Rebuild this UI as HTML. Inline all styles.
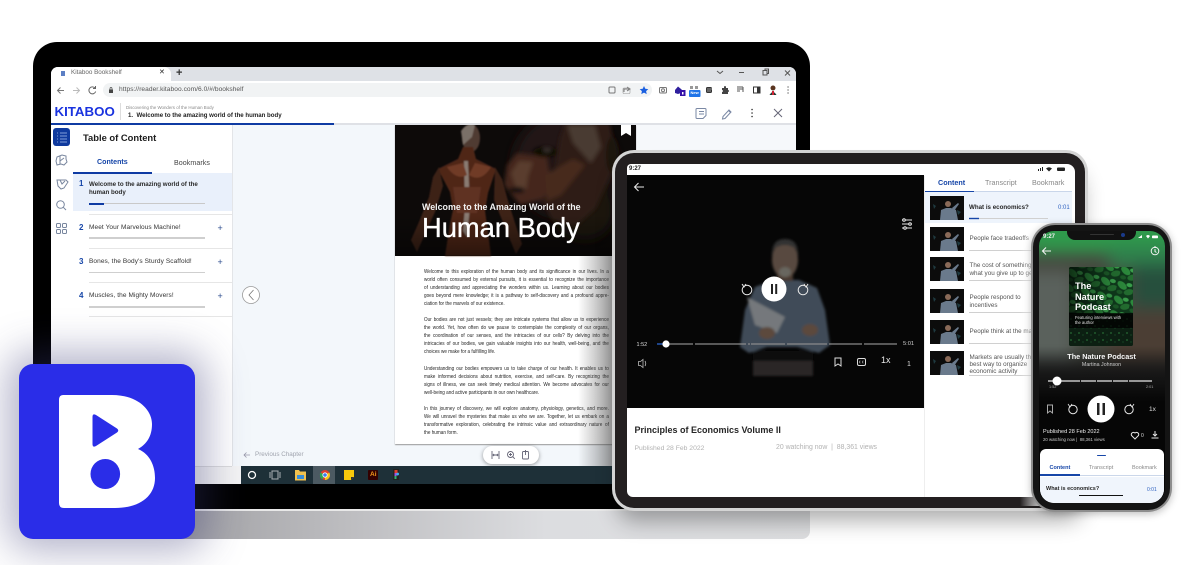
<!DOCTYPE html>
<html><head><meta charset="utf-8"><style>
html,body{margin:0;padding:0;background:#fff}
#r{position:relative;width:1200px;height:565px;overflow:hidden;background:#fff;font-family:"Liberation Sans",sans-serif}
.a{position:absolute}
.t{position:absolute;white-space:nowrap;line-height:1}
svg{position:absolute;overflow:visible}
#bk{transform:scaleX(.86);transform-origin:0 0}
#bk div{white-space:nowrap;height:8.05px;line-height:8.05px;text-align:justify;text-align-last:justify}
#bk div.e{text-align-last:left}
</style></head><body><div id="r">

<!-- laptop base -->
<div class="a" style="left:150px;top:509px;width:660px;height:30px;border-radius:0 0 8px 0;background:linear-gradient(90deg,#9c9ca0 0,#bdbdc0 30%,#dcdde0 60%,#dedfe1 100%)"></div>
<div class="a" style="left:150px;top:509px;width:660px;height:1.500px;background:#e8e8e8"></div>

<!-- laptop body -->
<div class="a" style="left:33px;top:42px;width:777px;height:467px;background:#000;border-radius:24px 24px 0 0"></div>
<div class="a" style="left:51px;top:67px;width:745px;height:417px;background:#fff;border-radius:7px 7px 0 0;overflow:hidden">
 <div class="a" style="left:0;top:0;width:745px;height:14px;background:#dee1e6"></div>
 <div class="a" style="left:0;top:0;width:120px;height:14px;background:#fff;border-radius:7px 7px 0 0"></div>
 <div class="a" style="left:0;top:30px;width:745px;height:1px;background:#fff"></div>
 <div class="a" style="left:52px;top:16px;width:549px;height:14px;background:#f1f3f4;border-radius:7px"></div>
</div>
<!-- tab strip -->
<div class="a" style="left:61px;top:71px;width:4px;height:5px;background:#5c7fc4"></div>
<div class="t" style="left:71px;top:69.500px;font-size:6.300px;color:#666">Kitaboo Bookshelf</div>
<div class="t" style="left:159px;top:69px;font-size:7px;color:#222">✕</div>
<div class="t" style="left:176px;top:67.500px;font-size:11px;color:#333;font-weight:bold">+</div>
<svg style="left:0;top:0" width="1200" height="565" fill="none" stroke="#555" stroke-width="1">
 <path d="M717 71l3 2.500 3-2.500M739 72.500h5"/>
 <rect x="763" y="70.500" width="4" height="4.500"/><path d="M765 70v-1h3.500v4.500h-1"/>
 <path d="M785 70.500l5 5m0-5l-5 5"/>
 <path d="M64 90.500h-6m2.500-3l-3 3 3 3" stroke="#777"/><path d="M73 90.500h6m-2.500-3l3 3-3 3" stroke="#bbb"/>
 <path d="M95 88a3.500 3.500 0 1 0 .7 3.500M95.500 86v2.500h-2.500" stroke="#666"/>
 <rect x="109" y="89.500" width="4" height="3.500" fill="#444" stroke="none"/><path d="M110 89.500v-1a1 1 0 0 1 2 0v1" stroke="#444" stroke-width=".7"/>
 <rect x="609" y="87" width="6" height="6" rx="1" stroke="#777"/>
 <path d="M624 92v-3h5m-2-2l3 2-3 2" stroke="#777"/><rect x="623" y="88" width="7" height="5.500" rx="1" stroke="#999" stroke-width=".6"/>
 <path d="M644 86l1.300 2.800 3 .3-2.200 2 .6 3-2.700-1.500-2.700 1.500.6-3-2.200-2 3-.3z" fill="#1a5fe0" stroke="none"/>
 <rect x="659.500" y="87.500" width="7" height="5.500" rx="1" stroke="#777"/><circle cx="663" cy="90.300" r="1.500" stroke="#777"/>
 <path d="M675 90l3-3.500 3 2.500 2 2-2 2-3 1-3-1z" fill="#2f1f9e" stroke="none"/>
 <rect x="680" y="90" width="5.500" height="6" fill="#3510a8" stroke="none"/><rect x="682" y="92" width="1.500" height="2.500" fill="#fff" stroke="none"/>
 <rect x="689" y="90" width="11.500" height="7" rx="1" fill="#1f74e8" stroke="none"/>
 <rect x="690" y="86" width="3" height="3" fill="#999" stroke="none"/><rect x="695" y="86" width="3" height="3" fill="#999" stroke="none"/>
 <rect x="706" y="87" width="6" height="6" rx="1.500" fill="#333" stroke="none"/><path d="M707 89h6m-6 2h4" stroke="#fff" stroke-width=".5"/>
 <path d="M722 88h2v-1a1 1 0 0 1 2 0v1h2v2a1 1 0 0 1 0 2v2h-6v-2a1 1 0 0 0 0-2z" fill="#444" stroke="none"/>
 <path d="M737 87h6m-6 2h6m-6 2h3m3-4v5" stroke="#555"/>
 <rect x="753.500" y="87" width="6.500" height="6" stroke="#333"/><rect x="757" y="87" width="3" height="6" fill="#333" stroke="none"/>
 <circle cx="773" cy="88" r="2.500" fill="#5a3520" stroke="none"/><path d="M769.500 95q3.500-6 7 0z" fill="#1c3c34" stroke="none"/><rect x="772" y="91" width="2" height="4" fill="#c23" stroke="none"/>
 <path d="M788 87h.1m-.1 3h.1m-.1 3h.1" stroke="#555" stroke-width="1.300" stroke-linecap="round"/>
</svg>
<div class="t" style="left:119px;top:87px;font-size:6.600px;color:#555;letter-spacing:.05px">https://reader.kitaboo.com/6.0/#/bookshelf</div>
<div class="t" style="left:690.500px;top:91.300px;font-size:4px;color:#fff;font-weight:bold">New</div>

<!-- reader header -->
<div class="t" style="left:54.500px;top:105px;font-size:13.300px;font-weight:bold;color:#1a33df">KITABOO</div>
<div class="a" style="left:120px;top:103px;width:1px;height:17px;background:#ddd"></div>
<div class="t" style="left:126px;top:105.500px;font-size:4.400px;color:#888">Discovering the Wonders of the Human Body</div>
<div class="t" style="left:128px;top:112.800px;font-size:6.100px;color:#222;font-weight:bold">1.&nbsp; Welcome to the amazing world of the human body</div>
<div class="a" style="left:51px;top:123px;width:745px;height:2px;background:#dfe1e6"></div>
<div class="a" style="left:51px;top:123px;width:283px;height:2px;background:#0f3ba3"></div>
<svg style="left:0;top:0" width="1200" height="565" fill="none" stroke="#7a88a4" stroke-width="1">
 <path d="M697 108.500h8a1 1 0 0 1 1 1v6l-3 3h-6a1 1 0 0 1-1-1v-8a1 1 0 0 1 1-1zm2 3h5m-5 2.500h5"/>
 <path d="M723 116.500l-.5 2.500 2.500-.5 6-6.500-2-2zm5.500-6l2 2"/>
 <path d="M752 109.500h.1m-.1 3.500h.1m-.1 3.500h.1" stroke="#333" stroke-width="1.500" stroke-linecap="round"/>
 <path d="M774 109l8 8m0-8l-8 8" stroke="#667"/>
</svg>

<!-- reader main area -->
<div class="a" style="left:233px;top:125px;width:563px;height:341px;background:#f3f7fb"></div>
<div class="a" style="left:636px;top:125px;width:160px;height:25px;background:#f6f8fb"></div>
<div class="a" style="left:51px;top:125px;width:181px;height:341px;background:#fff"></div>
<div class="a" style="left:51px;top:466px;width:190px;height:18px;background:#f4f4f4"></div>
<div class="a" style="left:51px;top:466px;width:181px;height:1px;background:#ddd"></div>
<div class="a" style="left:232px;top:125px;width:1px;height:341px;background:#e3e5e8"></div>

<!-- sidebar -->
<div class="a" style="left:53px;top:128px;width:17px;height:18px;background:#0f3a9e;border-radius:3px"></div>
<svg style="left:0;top:0" width="1200" height="565" fill="none" stroke="#78869e" stroke-width="1">
 <path d="M57 133h1m2 0h7m-10 3h1m2 0h7m-10 3h1m2 0h7m-10 3h1m2 0h7" stroke="#a8c0f0" stroke-width=".8"/>
 <path d="M57 157l5-2 4 1v3l1 3-3 3-3-1-4 1-1-4z"/><path d="M60 156v8m4-6l-4 3"/>
 <path d="M57 180h9l2 2-4 6-3 1-3-3z"/><path d="M60 180l2 4 3-3"/>
 <circle cx="60.500" cy="204.500" r="3.800"/><path d="M63.300 207.300l2.700 2.700"/>
 <rect x="56.500" y="223.500" width="4" height="4" rx="1"/><rect x="62.500" y="223.500" width="4" height="4" rx="1"/><rect x="56.500" y="229.500" width="4" height="4" rx="1"/><rect x="62.500" y="229.500" width="4" height="4" rx="1"/>
</svg>

<!-- TOC -->
<div class="t" style="left:83px;top:133px;font-size:9.400px;font-weight:bold;color:#1c1c1c">Table of Content</div>
<div class="t" style="left:97px;top:158.500px;font-size:7.100px;font-weight:bold;color:#1646a8">Contents</div>
<div class="t" style="left:174px;top:159.500px;font-size:7.100px;color:#444;letter-spacing:.05px">Bookmarks</div>
<div class="a" style="left:73px;top:173px;width:159px;height:38px;background:#e9f0fb"></div>
<div class="a" style="left:73px;top:172px;width:79px;height:1.500px;background:#0f3ba3"></div>
<div class="t" style="left:79px;top:180px;font-size:8px;font-weight:bold;color:#1646a8">1</div>
<div class="t" style="left:89px;top:180.500px;font-size:6.200px;font-weight:bold;color:#2a2a2a;line-height:8px">Welcome to the amazing world of the<br>human body</div>
<div class="a" style="left:89px;top:203px;width:116px;height:1.200px;background:#c9c9c9"></div>
<div class="a" style="left:89px;top:202.500px;width:15px;height:2px;background:#0f3ba3"></div>
<div class="a" style="left:89px;top:213.500px;width:143px;height:1.500px;background:#e6e6e6"></div>

<div class="t" style="left:79px;top:224px;font-size:8px;font-weight:bold;color:#1646a8">2</div>
<div class="t" style="left:89px;top:225px;font-size:6.500px;color:#333;letter-spacing:.09px">Meet Your Marvelous Machine!</div>
<div class="t" style="left:217.500px;top:223.500px;font-size:9px;color:#2a4a8c">+</div>
<div class="a" style="left:89px;top:237px;width:116px;height:1.500px;background:#cfcfcf"></div>
<div class="a" style="left:89px;top:248px;width:143px;height:1px;background:#e6e6e6"></div>

<div class="t" style="left:79px;top:257.500px;font-size:8px;font-weight:bold;color:#1646a8">3</div>
<div class="t" style="left:89px;top:258.500px;font-size:6.500px;color:#333;letter-spacing:.09px">Bones, the Body's Sturdy Scaffold!</div>
<div class="t" style="left:217.500px;top:257.500px;font-size:9px;color:#2a4a8c">+</div>
<div class="a" style="left:89px;top:271.500px;width:116px;height:1.500px;background:#cfcfcf"></div>
<div class="a" style="left:89px;top:282px;width:143px;height:1px;background:#e6e6e6"></div>

<div class="t" style="left:79px;top:292px;font-size:8px;font-weight:bold;color:#1646a8">4</div>
<div class="t" style="left:89px;top:293px;font-size:6.500px;color:#333;letter-spacing:.09px">Muscles, the Mighty Movers!</div>
<div class="t" style="left:217.500px;top:292px;font-size:9px;color:#2a4a8c">+</div>
<div class="a" style="left:89px;top:306px;width:116px;height:1.500px;background:#cfcfcf"></div>
<div class="a" style="left:89px;top:316px;width:143px;height:1px;background:#e6e6e6"></div>

<!-- prev arrow -->
<svg style="left:0;top:0" width="1200" height="565" fill="none" stroke="#9a9a9a" stroke-width=".8">
 <circle cx="251" cy="295" r="8.500" fill="#fff"/><path d="M253.500 290l-4.500 5 4.500 5" stroke="#777"/>
 <path d="M250 455h-6m2.500-2.500l-2.500 2.500 2.500 2.500" stroke="#99a"/>
</svg>
<div class="t" style="left:255px;top:451.800px;font-size:6.300px;color:#a0a4ae">Previous Chapter</div>

<!-- book -->
<div class="a" style="left:395px;top:125px;width:241px;height:319px;background:#fff;box-shadow:0 1px 1px #999;overflow:hidden">
 <svg style="left:0;top:0" width="241" height="131" viewBox="0 0 241 131">
  <defs>
   <filter id="bl"><feGaussianBlur stdDeviation="6"/></filter>
   <filter id="bs"><feGaussianBlur stdDeviation="2"/></filter>
   <filter id="bp"><feGaussianBlur stdDeviation=".9"/></filter>
   <filter id="bv"><feGaussianBlur stdDeviation="1.300"/></filter>
  </defs>
  <rect width="241" height="131" fill="#0d0a09"/>
  <!-- face -->
  <g filter="url(#bl)">
   <ellipse cx="170" cy="40" rx="52" ry="52" fill="#241812"/>
   <ellipse cx="190" cy="85" rx="30" ry="30" fill="#1d130f"/>
  </g>
  <g filter="url(#bs)">
   <path d="M170 -2h45l6 40-20 45-20 18-24-6-12-25 15-25 5-32z" fill="#2e1d16"/>
   <path d="M112 40l10-12 30 4 5 30-10 12-22 6-16-20z" fill="#44281c"/>
   <path d="M116 48l8-12 14 1-5 14-2 14-10-2z" fill="#5a3c2e"/>
   <path d="M172 0h28l6 22-10 16-18-20z" fill="#4a3a32"/>
   <path d="M150 50l28-16 12 6-24 30-14 6z" fill="#47291d"/>
   <ellipse cx="150" cy="27" rx="12" ry="5" fill="#0a0706"/>
   <ellipse cx="152" cy="25" rx="4" ry="2" fill="#3c3632"/>
   <ellipse cx="122" cy="65" rx="8" ry="3" fill="#0d0807"/>
   <ellipse cx="217" cy="30" rx="6" ry="18" fill="#1c1310"/>
  </g>
  <!-- figure -->
  <g filter="url(#bp)">
   <ellipse cx="76" cy="13" rx="9" ry="14" fill="#4f3a31"/>
   <path d="M66 6q6-9 14-6l-3 12-9 8z" fill="#7a7068"/>
   <path d="M68 22h10l3 12 20 10-8 24-3 18 2 14 4 31H50l5-32 3-14-3-18-12-23 20-10z" fill="#4f2719"/>
   <path d="M44 42l-6 10-4 20-10 25-8 18 6 12 8-18 10-22 8-26z" fill="#3d2016"/>
   <path d="M100 42l7 12 6 22 8 25 6 18-6 10-10-24-12-30z" fill="#3d2016"/>
   <path d="M69 36l4 0 2 46-3 30-4-6 2-24z" fill="#8a7c72"/>
   <path d="M52 42q10 14 20 8l-4-12zm44 0q-10 16-22 8l6-12z" fill="#703b28"/>
   <path d="M58 62h28l-4 26H62z" fill="#5e3020"/>
  </g>
 </svg>
 <div class="a" style="left:0;top:90px;width:241px;height:41px;background:linear-gradient(180deg,rgba(0,0,0,0),rgba(0,0,0,.45))"></div>
 <svg style="left:226px;top:0" width="10" height="11"><path d="M0 0h10v11l-5-3-5 3z" fill="#fff"/></svg>
 <div class="t" style="left:27px;top:77.500px;font-size:8.900px;font-weight:bold;color:#f2f2f2">Welcome to the Amazing World of the</div>
 <div class="t" style="left:27px;top:89px;font-size:27.300px;color:#fff;-webkit-text-stroke:.35px #fff">Human Body</div>
 <div id="bk" class="a" style="left:29px;top:143px;width:215px;font-size:5.400px;color:#1e1e1e">
  <div>Welcome to this exploration of the human body and its significance in our lives. In a</div>
  <div>world often consumed by external pursuits, it is essential to recognize the importance</div>
  <div>of understanding and appreciating the wonders within us. Learning about our bodies</div>
  <div>goes beyond mere knowledge; it is a pathway to self-discovery and a profound appre-</div>
  <div class="e">ciation for the marvels of our existence.</div>
  <div>&nbsp;</div>
  <div>Our bodies are not just vessels; they are intricate systems that allow us to experience</div>
  <div>the world. Yet, how often do we pause to contemplate the complexity of our organs,</div>
  <div>the coordination of our senses, and the intricacies of our cells? By delving into the</div>
  <div>intricacies of our bodies, we gain valuable insights into our health, well-being, and the</div>
  <div class="e">choices we make for a fulfilling life.</div>
  <div>&nbsp;</div>
  <div>Understanding our bodies empowers us to take charge of our health. It enables us to</div>
  <div>make informed decisions about nutrition, exercise, and self-care. By recognizing the</div>
  <div>signs of illness, we can seek timely medical attention. We become advocates for our</div>
  <div class="e">well-being and active participants in our own healthcare.</div>
  <div>&nbsp;</div>
  <div>In this journey of discovery, we will explore anatomy, physiology, genetics, and more.</div>
  <div>We will unravel the mysteries that make us who we are. Together, let us embark on a</div>
  <div>transformative exploration, celebrating the intrinsic value and extraordinary nature of</div>
  <div class="e">the human form.</div>
 </div>
</div>
<!-- zoom pill -->
<div class="a" style="left:483px;top:446px;width:56px;height:18px;background:#fff;border-radius:9px;box-shadow:0 1px 4px rgba(0,0,0,.4)"></div>
<svg style="left:0;top:0" width="1200" height="565" fill="none" stroke="#667" stroke-width=".9">
 <path d="M492 451v8m7-8v8m-6-4h5m-4-1l-1 1 1 1m3-2l1 1-1 1"/>
 <circle cx="510.500" cy="454.500" r="3"/><path d="M512.800 456.800l2 2M509 454.500h3m-1.500-1.500v3"/>
 <rect x="522.500" y="451.500" width="6" height="7.500" rx="1"/><path d="M525.500 450v5"/>
</svg>

<!-- taskbar -->
<div class="a" style="left:241px;top:466px;width:371px;height:18px;background:#1e3038"></div>
<div class="a" style="left:313px;top:466px;width:22px;height:18px;background:#4c5a62"></div>
<svg style="left:0;top:0" width="1200" height="565" fill="none">
 <circle cx="252" cy="475" r="3.500" stroke="#fff" stroke-width="1.300"/>
 <path d="M272 471h6v8h-6zM270 472v6M280 472v6" stroke="#a9b0b4" stroke-width="1"/>
 <path d="M295 470h4l1 1.500h6v9h-11z" fill="#f2c14e"/><rect x="297" y="475" width="7" height="4" fill="#3a8ed8"/>
 <circle cx="325" cy="475" r="5" fill="#e0402f"/><path d="M325 475l4.300-2.500a5 5 0 0 1-4.300 7.500z" fill="#f7c517"/><path d="M325 475l-2.500 4.300a5 5 0 0 1-2-6.800z" fill="#2fa84f"/><circle cx="325" cy="475" r="2.200" fill="#3a7cec" stroke="#fff" stroke-width=".8"/>
 <path d="M344 470h10v7l-3 3h-7z" fill="#f8c90c"/><path d="M351 480l3-3h-3z" fill="#333"/>
 <rect x="368" y="470" width="10" height="10" rx="1" fill="#300"/>
 <path d="M393 469h6v11h-6z" fill="#222"/><circle cx="397.500" cy="474" r="1.500" fill="#3cb4f0"/><rect x="394.500" y="470" width="3" height="3" fill="#e0402f"/><rect x="394.500" y="473" width="2" height="3" fill="#a050e0"/><rect x="394.500" y="476" width="2" height="3" fill="#2fb070"/>
</svg>
<div class="t" style="left:370px;top:472px;font-size:6.500px;font-weight:bold;color:#f59b1c">Ai</div>

<!-- tablet shadow on book -->
<div class="a" style="left:578px;top:256px;width:36px;height:210px;background:linear-gradient(90deg,rgba(70,70,70,0),rgba(70,70,70,.55))"></div>

<!-- tablet -->
<div class="a" style="left:612px;top:150px;width:476px;height:361px;background:#d4d4d4;border-radius:22px;box-shadow:0 16px 22px -6px rgba(0,0,0,.32)"></div>
<div class="a" style="left:615px;top:153px;width:470px;height:355px;background:#231f20;border-radius:19px"></div>
<div class="a" style="left:627px;top:164px;width:448px;height:333px;background:#fff;border-radius:4px 8px 8px 6px;overflow:hidden">
 <!-- video -->
 <div class="a" style="left:0;top:11px;width:296.500px;height:233px;background:#060606"></div>
 <div class="t" style="left:2px;top:2px;font-size:6px;color:#222;font-weight:bold">9:27</div>
 <svg style="left:0;top:11px" width="297" height="233" viewBox="0 0 297 233">
  <g filter="url(#bv)">
   <rect x="126" y="186" width="60" height="15" fill="#2a2825"/>
   <path d="M126 176h60v10h-60z" fill="#0c0c0c"/>
   <path d="M128 112L146 105H172L190 113L198 135L203 170L192 178L170 172H140L122 178L113 172L118 135z" fill="#414c58"/>
   <path d="M120 122L158 142L150 158L128 150z" fill="#75787b"/>
   <rect x="150" y="92" width="16" height="14" fill="#47392f"/>
   <ellipse cx="158" cy="85" rx="13" ry="18" fill="#584a40"/>
   <path d="M145 82q-1-18 13-18t13 18l-2-8q-11-8-22 0z" fill="#333"/>
   <ellipse cx="158" cy="97" rx="6" ry="5" fill="#68665e"/>
   <ellipse cx="140" cy="158" rx="8" ry="6" fill="#5c4a3c"/><ellipse cx="183" cy="155" rx="8" ry="6" fill="#5c4a3c"/>
  </g>
 </svg>
</div>
<svg style="left:0;top:0" width="1200" height="565" fill="none" stroke="#e8e8e8" stroke-width="1">
 <path d="M644 187h-9m3.500-4l-4 4 4 4"/>
 <path d="M902 220h10m-10 4h10m-10 4h10"/><circle cx="904" cy="220" r="1.300" fill="#222"/><circle cx="910" cy="224" r="1.300" fill="#222"/><circle cx="905" cy="228" r="1.300" fill="#222"/>
 <circle cx="747" cy="290" r="4.800"/><circle cx="803" cy="290" r="4.800"/>
 <path d="M742 284l2 3 2-3M808 284l-2 3-2-3" fill="#222"/>
 <circle cx="774" cy="289" r="12.500" fill="#fff" stroke="none"/>
 <rect x="771" y="284" width="2" height="10" fill="#222" stroke="none"/><rect x="775.200" y="284" width="2" height="10" fill="#222" stroke="none"/>
 <path d="M657 344h6" stroke="#2f6fe0" stroke-width="1.200"/>
 <path d="M663 344h30m2 0h51m2 0h2m1 0h34m2 0h40m2 0h33m2 0h33" stroke="#8a8a8a" stroke-width="1.200"/>
 <circle cx="666" cy="344" r="3.600" fill="#fff" stroke="none"/>
 <path d="M638.500 361.500v4h2l2.500 2v-8l-2.500 2zM645 361q1.500 2.500 0 5" stroke="#bbb" stroke-width=".8"/>
 <path d="M835 358h6v8l-3-2-3 2z" stroke="#ddd"/>
 <rect x="857.500" y="358.500" width="8" height="7" rx="1.500" stroke="#ddd"/>
 <path d="M860.500 361h-1v2h1m3-2h-1v2h1" stroke="#ddd" stroke-width=".5"/>
</svg>
<div class="t" style="left:636.500px;top:342.500px;font-size:5.500px;color:#ddd">1:52</div>
<div class="t" style="left:903px;top:342px;font-size:5.700px;color:#ccc">5:01</div>
<div class="t" style="left:881px;top:355.500px;font-size:9px;color:#e8e8e8">1x</div>
<div class="t" style="left:907px;top:360.500px;font-size:7px;color:#ddd">1</div>

<div class="t" style="left:634.500px;top:425.500px;font-size:9px;font-weight:bold;color:#262626">Principles of Economics Volume II</div>
<div class="t" style="left:634.500px;top:445.500px;font-size:6.800px;color:#b2b2b2">Published 28 Feb 2022</div>
<div class="t" style="left:776px;top:445.300px;font-size:6.900px;color:#b2b2b2">20 watching now&nbsp; |&nbsp; 88,361 views</div>
<div class="a" style="left:924px;top:176px;width:1px;height:321px;background:#eee"></div>

<!-- right panel -->
<svg style="left:0;top:0" width="1200" height="565" fill="#222">
 <rect x="1038" y="169" width="1" height="2"/><rect x="1040" y="168" width="1" height="3"/><rect x="1042" y="167" width="1" height="4"/>
 <path d="M1046 168.500q3-2.500 6 0l-3 3z"/><rect x="1057" y="167.500" width="8" height="3.500" rx="1"/>
</svg>
<div class="t" style="left:938px;top:178.500px;font-size:7.200px;font-weight:bold;color:#1646a8">Content</div>
<div class="t" style="left:985px;top:178.500px;font-size:7.200px;color:#888">Transcript</div>
<div class="t" style="left:1032px;top:178.500px;font-size:7.200px;color:#888">Bookmark</div>
<div class="a" style="left:925px;top:191px;width:147px;height:1px;background:#c9d6ea"></div>
<div class="a" style="left:925px;top:190.500px;width:49px;height:1.500px;background:#1646a8"></div>
<div class="a" style="left:925px;top:192px;width:147px;height:31px;background:#eef4fc"></div>
<svg style="left:0;top:0" width="1200" height="565">
 <defs>
  <g id="th">
   <rect width="34" height="24" fill="#0c0c0c"/>
   <path d="M10 24l1-10 5-2 5 0 5 2 2 10z" fill="#6a7a8c"/>
   <circle cx="18" cy="8" r="3" fill="#8a6a58"/>
   <path d="M22 12l6-5 1 1-5 7z" fill="#6a7a8c"/>
   <path d="M3 8l3 2-2 3zM27 14l4 2-3 3z" fill="#1f3a40"/>
  </g>
 </defs>
 <use href="#th" x="930" y="196"/>
 <use href="#th" x="930" y="227"/>
 <use href="#th" x="930" y="257"/>
 <use href="#th" x="930" y="289"/>
 <use href="#th" x="930" y="320"/>
 <use href="#th" x="930" y="351"/>
 <g fill="#d0d0d0">
  <rect x="969" y="250" width="66" height="1"/>
  <rect x="969" y="280" width="66" height="1"/>
  <rect x="969" y="312" width="66" height="1"/>
  <rect x="969" y="343" width="66" height="1"/>
  <rect x="969" y="375" width="66" height="1"/>
  <rect x="969" y="218" width="79" height="1"/>
 </g>
 <rect x="969" y="217.800" width="10" height="1.400" fill="#1646a8"/>
</svg>
<div class="t" style="left:969px;top:204.500px;font-size:6.200px;font-weight:bold;color:#262626">What is economics?</div>
<div class="t" style="left:1058px;top:204.500px;font-size:6px;color:#2f62c0">0:01</div>
<div class="t" style="left:969.500px;top:236px;font-size:6.300px;color:#555">People face tradeoffs</div>
<div class="t" style="left:969.500px;top:262px;font-size:6.300px;color:#555;line-height:7.500px">The cost of something is<br>what you give up to get it</div>
<div class="t" style="left:969.500px;top:294px;font-size:6.300px;color:#555;line-height:8px">People respond to<br>incentives</div>
<div class="t" style="left:969.500px;top:329px;font-size:6.300px;color:#555">People think at the margin</div>
<div class="t" style="left:969.500px;top:353.500px;font-size:6.300px;color:#555;line-height:7px">Markets are usually the<br>best way to organize<br>economic activity</div>

<!-- phone -->
<div class="a" style="left:1020px;top:226px;width:20px;height:280px;background:linear-gradient(90deg,rgba(255,255,255,0),rgba(255,255,255,.85))"></div>
<div class="a" style="left:1031px;top:223px;width:141px;height:289px;background:#8e8e8e;border-radius:24px;box-shadow:0 2px 8px rgba(0,0,0,.25)"></div>
<div class="a" style="left:1033px;top:225px;width:137px;height:285px;background:#141414;border-radius:22px"></div>
<div class="a" style="left:1038.500px;top:231px;width:126px;height:272px;border-radius:15px;overflow:hidden;background:#000">
 <div class="a" style="left:-20px;top:-20px;width:170px;height:190px;filter:blur(8px);background:#45483f">
  <div class="a" style="left:0;top:0;width:170px;height:42px;background:#2f9a4c"></div>
  <div class="a" style="left:90px;top:35px;width:80px;height:22px;background:#2f7f4c"></div>
  <div class="a" style="left:5px;top:60px;width:50px;height:90px;background:#5a615c"></div>
  <div class="a" style="left:115px;top:55px;width:50px;height:40px;background:#264f3d"></div>
  <div class="a" style="left:90px;top:100px;width:70px;height:55px;background:#4b3e34"></div>
  <div class="a" style="left:0;top:150px;width:170px;height:40px;background:#252525"></div>
 </div>
 <div class="a" style="left:0;top:115px;width:126px;height:60px;background:linear-gradient(180deg,rgba(0,0,0,0),#060606)"></div>
 <div class="a" style="left:0;top:170px;width:126px;height:102px;background:#060606"></div>
</div>
<div class="a" style="left:1067px;top:231px;width:69px;height:9px;background:#111;border-radius:0 0 8px 8px"></div>
<div class="a" style="left:1090px;top:233.500px;width:24px;height:1.500px;background:#333;border-radius:1px"></div>
<div class="a" style="left:1121px;top:232.500px;width:4px;height:4px;background:#1a3a8a;border-radius:50%"></div>
<div class="t" style="left:1043px;top:234px;font-size:6px;font-weight:bold;color:#eee">9:27</div>
<svg style="left:0;top:0" width="1200" height="565" fill="none" stroke="#f2f2f2" stroke-width="1">
 <path d="M1138 238l4-3v3z" fill="#fff" stroke="none"/><path d="M1146 236q2-2 4 0l-2 2.500z" fill="#fff" stroke="none"/><rect x="1152" y="235.500" width="6" height="2.800" rx=".8" fill="#fff" stroke="none"/>
 <path d="M1051 251h-8m3-3.500l-3.500 3.500 3.500 3.500" stroke-width="1.100"/>
 <circle cx="1155" cy="251" r="3.800"/><path d="M1155 249v2.500l1.500 1M1155 246v1.500h1.500"/>
</svg>
<!-- album -->
<div class="a" style="left:1069px;top:267px;width:64px;height:79px;overflow:hidden;background:#0e2a18;border-radius:2px">
 <svg style="left:0;top:0" width="64" height="79">
  <defs><pattern id="lf" width="17" height="15" patternUnits="userSpaceOnUse" patternTransform="rotate(14)">
   <rect width="17" height="15" fill="#0f3a1c"/>
   <ellipse cx="5" cy="5" rx="5.500" ry="3.200" fill="#2c8a3c" transform="rotate(28 5 5)"/>
   <ellipse cx="13" cy="10" rx="5" ry="3" fill="#236e30" transform="rotate(-24 13 10)"/>
   <ellipse cx="12" cy="3" rx="3" ry="2" fill="#3aa04c"/>
   <ellipse cx="4" cy="12" rx="3" ry="2" fill="#1c5a28"/>
  </pattern>
  <pattern id="lg" width="8" height="7" patternUnits="userSpaceOnUse"><rect width="8" height="7" fill="#0c1f12"/><circle cx="2" cy="3" r=".9" fill="#266a34"/><circle cx="6" cy="5" r=".6" fill="#1d5a2c"/></pattern>
  <linearGradient id="dk" x1="0" x2="1"><stop offset="0" stop-color="#000" stop-opacity=".65"/><stop offset=".6" stop-color="#000" stop-opacity=".1"/><stop offset="1" stop-color="#000" stop-opacity="0"/></linearGradient>
  </defs>
  <rect width="64" height="47" fill="url(#lf)"/>
  <rect y="47" width="64" height="32" fill="url(#lg)"/>
  <rect width="64" height="47" fill="url(#dk)"/>
  <rect y="46" width="64" height="15" fill="#000" opacity=".75"/>
 </svg>
 <div class="t" style="left:6px;top:14px;font-size:9.200px;font-weight:bold;color:#fff;line-height:10.500px">The<br>Nature<br>Podcast</div>
 <div class="t" style="left:6px;top:47.500px;font-size:4.200px;color:#e0e0e0;line-height:5.200px">Featuring interviews with<br>the author</div>
</div>
<div class="t" style="left:1031px;top:353.300px;width:141px;text-align:center;font-size:7.300px;font-weight:bold;color:#f4f4f4">The Nature Podcast</div>
<div class="t" style="left:1031px;top:363.300px;width:141px;text-align:center;font-size:5.300px;color:#ccc">Martina Johnson</div>
<svg style="left:0;top:0" width="1200" height="565" fill="none" stroke="#e8e8e8" stroke-width="1">
 <path d="M1048 381h32m1 0h15m1 0h15m1 0h15m1 0h23" stroke-width="1.200"/>
 <circle cx="1057" cy="381" r="4.500" fill="#fff" stroke="none"/>
 <path d="M1047.500 405h5v8l-2.500-2-2.500 2z" stroke="#aaa"/>
 <circle cx="1073" cy="409.500" r="4.200"/><circle cx="1129" cy="409.500" r="4.200"/>
 <path d="M1068 404l2 3 2-3M1134 404l-2 3-2-3" stroke-width=".8"/>
 <circle cx="1101" cy="409" r="13.500" fill="#fff" stroke="none"/>
 <rect x="1097" y="403" width="2.500" height="12" fill="#222" stroke="none"/><rect x="1102.500" y="403" width="2.500" height="12" fill="#222" stroke="none"/>
 <path d="M1135 439l-3.500-3.500a2.200 2.200 0 0 1 3.500-2.500 2.200 2.200 0 0 1 3.500 2.500z"/>
 <path d="M1155 431v5m-2-2l2 2 2-2M1151.500 438h7"/>
</svg>
<div class="t" style="left:1049px;top:386.300px;font-size:3.800px;color:#aaa">1:52</div>
<div class="t" style="left:1146px;top:386.300px;font-size:3.800px;color:#aaa">2:01</div>
<div class="t" style="left:1149px;top:406.500px;font-size:6.500px;color:#ddd">1x</div>
<div class="t" style="left:1043px;top:429.800px;font-size:5.500px;color:#eee">Published 28 Feb 2022</div>
<div class="t" style="left:1043px;top:438px;font-size:4.300px;color:#ccc">20 watching now&nbsp;|&nbsp; 88,361 views</div>
<div class="t" style="left:1141px;top:433.500px;font-size:5px;color:#ddd">0</div>
<!-- sheet -->
<div class="a" style="left:1039.500px;top:449px;width:124px;height:54px;background:#fff;border-radius:6px 6px 14px 14px;overflow:hidden">
 <div class="a" style="left:0;top:28px;width:124px;height:26px;background:#f0f5fc"></div>
 <div class="a" style="left:0;top:25.500px;width:124px;height:1.500px;background:#cbd7ea"></div>
 <div class="a" style="left:0;top:25px;width:40px;height:1.800px;background:#1646a8"></div>
 <div class="a" style="left:57px;top:5.500px;width:9px;height:1.200px;background:#1646a8;border-radius:1px"></div>
 <div class="a" style="left:39.500px;top:45.500px;width:44px;height:1.500px;background:#111"></div>
</div>
<div class="t" style="left:1049.500px;top:465.500px;font-size:5.500px;font-weight:bold;color:#1646a8">Content</div>
<div class="t" style="left:1089px;top:465.500px;font-size:5.500px;color:#888">Transcript</div>
<div class="t" style="left:1132px;top:465.500px;font-size:5.500px;color:#888">Bookmark</div>
<div class="t" style="left:1046px;top:487.300px;font-size:5.500px;font-weight:bold;color:#262626">What is economics?</div>
<div class="t" style="left:1147px;top:488.300px;font-size:5px;color:#2f62c0">0:01</div>

<!-- app icon -->
<div class="a" style="left:19px;top:364px;width:176px;height:175px;background:#2a2de8;border-radius:14px;box-shadow:0 0 40px 12px rgba(55,55,115,.38)"></div>
<svg style="left:0;top:0" width="1200" height="565">
 <path d="M63 395H112C138 395 152 410 152 424C152 436 147 444 138 449C150 454 155 466 155 478C155 496 140 508 115 508H64Q59 508 59 503V400Q59 395 63 395Z" fill="#fff"/>
 <path d="M92.500 417Q92.500 413 96 415L117 428.500Q119.500 430.500 117 432.500L96 446Q92.500 448 92.500 444Z" fill="#2a2de8"/>
 <ellipse cx="105.300" cy="474" rx="14.800" ry="15" fill="#2a2de8"/>
</svg>

</div></body></html>
